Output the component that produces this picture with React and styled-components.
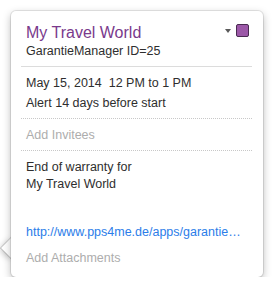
import styled, { createGlobalStyle } from "styled-components";

const GlobalStyle = createGlobalStyle`
  html {
    background: #ffffff;
  }
  body {
    margin: 0;
    padding: 0;
    font-family: "Liberation Sans", Arial, sans-serif;
  }
`;

export default function App() {
  return (
    <>
      <GlobalStyle />
      <Popover>
        <Arrow />
        <Content>
          <Header>
            <TitleBlock>
              <Title>My Travel World</Title>
              <Subtitle>GarantieManager ID=25</Subtitle>
            </TitleBlock>
            <Controls>
              <Caret />
              <ColorSwatch />
            </Controls>
          </Header>
          <Divider />
          <Section $pad="6px 0 5px">
            <Line>May 15, 2014  12 PM to 1 PM</Line>
            <Line>Alert 14 days before start</Line>
          </Section>
          <Divider $dotted />
          <Section $pad="6px 0 5px">
            <Line $muted>Add Invitees</Line>
          </Section>
          <Divider $dotted />
          <Section $pad="8px 0 0">
            <Notes>
              End of warranty for
              <br />
              My Travel World
            </Notes>
            <Link href="#">http://www.pps4me.de/apps/garantie…</Link>
            <Line $muted $gap="6px">Add Attachments</Line>
          </Section>
        </Content>
      </Popover>
    </>
  );
}

const Popover = styled.div`
  position: relative;
  margin: 11px 0 0 11px;
  width: 252px;
  height: 266px;
  box-sizing: border-box;
  background: #ffffff;
  border-radius: 5px;
  box-shadow: 0 0 0 1px rgba(0, 0, 0, 0.09), 0 3px 9px rgba(0, 0, 0, 0.28);
`;

const Arrow = styled.div`
  position: absolute;
  left: -7px;
  top: 230px;
  width: 14px;
  height: 14px;
  background: #ffffff;
  transform: rotate(45deg);
  box-shadow: 0 0 0 1px rgba(0, 0, 0, 0.14), 0 2px 6px rgba(0, 0, 0, 0.25);
  z-index: -1;
`;

const Content = styled.div`
  padding: 0 11px 0 10px;
  color: #333333;
`;

const Header = styled.div`
  display: flex;
  justify-content: space-between;
  align-items: flex-start;
  padding: 12px 3px 7px 5px;
`;

const TitleBlock = styled.div`
  display: flex;
  flex-direction: column;
`;

const Title = styled.div`
  font-size: 16px;
  line-height: 19px;
  color: #7a3a8c;
`;

const Subtitle = styled.div`
  margin-top: 1px;
  font-size: 12.5px;
  line-height: 16px;
  color: #2e2e2e;
`;

const Controls = styled.div`
  display: flex;
  align-items: center;
  gap: 5px;
  margin-top: 1px;
`;

const Caret = styled.div`
  width: 0;
  height: 0;
  border-left: 3px solid transparent;
  border-right: 3px solid transparent;
  border-top: 4px solid #5a5a5a;
`;

const ColorSwatch = styled.div`
  width: 13px;
  height: 13px;
  box-sizing: border-box;
  background: #9c58a8;
  border: 1px solid #4a2b52;
  border-radius: 2px;
`;

const Divider = styled.div`
  height: 0;
  border-top: 1px ${(p) => (p.$dotted ? "dotted #c8c8c8" : "solid #dcdcdc")};
`;

const Section = styled.div`
  display: flex;
  flex-direction: column;
  padding: ${(p) => p.$pad};
  padding-left: 5px;
`;

const Line = styled.div`
  margin-top: ${(p) => p.$gap || "0"};
  font-size: 12.5px;
  line-height: 20px;
  white-space: pre;
  color: ${(p) => (p.$muted ? "#adadad" : "#2e2e2e")};
`;

const Notes = styled.div`
  font-size: 12.5px;
  line-height: 16.5px;
  color: #2e2e2e;
`;

const Link = styled.a`
  margin-top: 30px;
  font-size: 12.5px;
  line-height: 20px;
  color: #2b7de9;
  text-decoration: none;
  white-space: nowrap;
  overflow: hidden;
  text-overflow: ellipsis;
`;
